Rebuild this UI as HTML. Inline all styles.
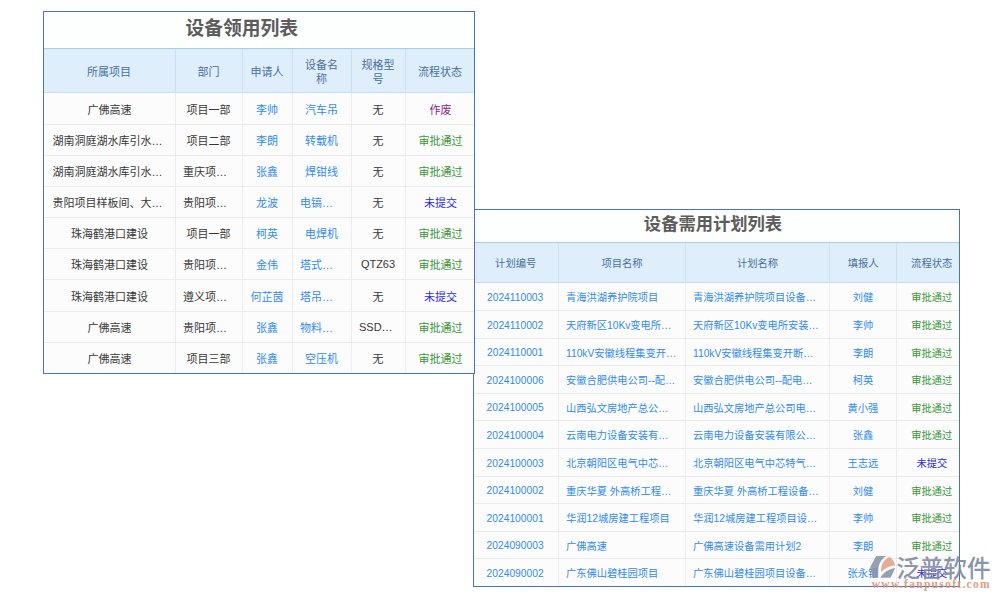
<!DOCTYPE html>
<html lang="zh-CN"><head><meta charset="utf-8"><title>设备领用列表</title>
<style>
html,body{margin:0;padding:0;background:#fff;}
body{width:1000px;height:600px;position:relative;overflow:hidden;font-family:"Liberation Sans", "Noto Sans CJK SC", sans-serif;}
.panel{position:absolute;background:#fcfcfc;box-sizing:border-box;}
.panel::after{content:"";position:absolute;left:0;top:0;right:0;bottom:0;border:1px solid #4573c6;pointer-events:none;}
.panel div{position:absolute;box-sizing:border-box;}
.title{text-align:center;font-weight:bold;color:#5c5c5c;background:#fdfefe;white-space:nowrap;}
.head{background:#dfeefb;border-top:1px solid #a6cdf0;border-bottom:1px solid #c4dcf2;}
.hc{display:flex;align-items:center;justify-content:center;text-align:center;color:#47709c;line-height:1.25;}
.wr{display:inline-block;width:34px;word-break:break-all;text-align:center;}
.row{border-bottom:1px solid #ececec;}
.c{display:flex;align-items:center;white-space:nowrap;overflow:hidden;}
.c.ctr{justify-content:center;}
.c.lft{justify-content:flex-start;}
.vs{width:1px;background:#ececec;}
.vsh{width:1px;background:#cbe0f3;}
.dark{color:#383838;}
.link{color:#318bf0;}
.ok{color:#3a963a;}
.no{color:#2c2ae8;}
.void{color:#8a1a8a;}
#p1{z-index:2;}
#logo{z-index:3;position:absolute;left:868px;top:552px;width:130px;height:46px;}
</style></head><body>
<div class="panel" id="p1" style="left:43px;top:11px;width:432px;height:363px">
<div class="title" style="left:0;top:0;width:432px;height:37px;font-size:18.8px;line-height:37px"><span style="position:relative;top:-1.5px;left:-17.2px">设备领用列表</span></div>
<div class="head" style="left:0;top:37px;width:432px;height:45px"></div>
<div class="hc" style="left:0px;top:37px;width:132px;height:45px;font-size:11px"><span style="position:relative;top:2.2px;left:0px">所属项目</span></div>
<div class="hc" style="left:132px;top:37px;width:67px;height:45px;font-size:11px"><span style="position:relative;top:2.2px;left:0px">部门</span></div>
<div class="hc" style="left:199px;top:37px;width:50px;height:45px;font-size:11px"><span style="position:relative;top:2.2px;left:0px">申请人</span></div>
<div class="hc" style="left:249px;top:37px;width:59px;height:45px;font-size:11px"><span style="position:relative;top:2.2px;left:0px"><span class="wr">设备名称</span></span></div>
<div class="hc" style="left:308px;top:37px;width:54px;height:45px;font-size:11px"><span style="position:relative;top:2.2px;left:0px"><span class="wr">规格型号</span></span></div>
<div class="hc" style="left:362px;top:37px;width:70px;height:45px;font-size:11px"><span style="position:relative;top:2.2px;left:0px">流程状态</span></div>
<div class="row" style="left:0;top:82px;width:432px;height:32px"></div>
<div class="c ctr" style="left:0px;top:82px;width:132px;height:32px;font-size:11px;"><span class="dark" style="position:relative;top:-0.5px;left:0.5px">广佛高速</span></div>
<div class="c ctr" style="left:132px;top:82px;width:67px;height:32px;font-size:11px;"><span class="dark" style="position:relative;top:-0.5px;left:0px">项目一部</span></div>
<div class="c ctr" style="left:199px;top:82px;width:50px;height:32px;font-size:11px;"><span class="link" style="position:relative;top:-0.5px;left:0px">李帅</span></div>
<div class="c ctr" style="left:249px;top:82px;width:59px;height:32px;font-size:11px;"><span class="link" style="position:relative;top:-0.5px;left:0px">汽车吊</span></div>
<div class="c ctr" style="left:308px;top:82px;width:54px;height:32px;font-size:11px;"><span class="dark" style="position:relative;top:-0.5px;left:0px">无</span></div>
<div class="c ctr" style="left:362px;top:82px;width:70px;height:32px;font-size:11px;"><span class="void" style="position:relative;top:-0.5px;left:0.5px">作废</span></div>
<div class="row" style="left:0;top:114px;width:432px;height:31px"></div>
<div class="c lft" style="left:0px;top:114px;width:132px;height:31px;font-size:11px;padding-left:9px;"><span class="dark" style="position:relative;top:-0.5px;left:0.5px">湖南洞庭湖水库引水…</span></div>
<div class="c ctr" style="left:132px;top:114px;width:67px;height:31px;font-size:11px;"><span class="dark" style="position:relative;top:-0.5px;left:0px">项目二部</span></div>
<div class="c ctr" style="left:199px;top:114px;width:50px;height:31px;font-size:11px;"><span class="link" style="position:relative;top:-0.5px;left:0px">李朗</span></div>
<div class="c ctr" style="left:249px;top:114px;width:59px;height:31px;font-size:11px;"><span class="link" style="position:relative;top:-0.5px;left:0px">转载机</span></div>
<div class="c ctr" style="left:308px;top:114px;width:54px;height:31px;font-size:11px;"><span class="dark" style="position:relative;top:-0.5px;left:0px">无</span></div>
<div class="c ctr" style="left:362px;top:114px;width:70px;height:31px;font-size:11px;"><span class="ok" style="position:relative;top:-0.5px;left:0.5px">审批通过</span></div>
<div class="row" style="left:0;top:145px;width:432px;height:31px"></div>
<div class="c lft" style="left:0px;top:145px;width:132px;height:31px;font-size:11px;padding-left:9px;"><span class="dark" style="position:relative;top:-0.5px;left:0.5px">湖南洞庭湖水库引水…</span></div>
<div class="c lft" style="left:132px;top:145px;width:67px;height:31px;font-size:11px;padding-left:8px;"><span class="dark" style="position:relative;top:-0.5px;left:0px">重庆项…</span></div>
<div class="c ctr" style="left:199px;top:145px;width:50px;height:31px;font-size:11px;"><span class="link" style="position:relative;top:-0.5px;left:0px">张鑫</span></div>
<div class="c ctr" style="left:249px;top:145px;width:59px;height:31px;font-size:11px;"><span class="link" style="position:relative;top:-0.5px;left:0px">焊钳线</span></div>
<div class="c ctr" style="left:308px;top:145px;width:54px;height:31px;font-size:11px;"><span class="dark" style="position:relative;top:-0.5px;left:0px">无</span></div>
<div class="c ctr" style="left:362px;top:145px;width:70px;height:31px;font-size:11px;"><span class="ok" style="position:relative;top:-0.5px;left:0.5px">审批通过</span></div>
<div class="row" style="left:0;top:176px;width:432px;height:31px"></div>
<div class="c lft" style="left:0px;top:176px;width:132px;height:31px;font-size:11px;padding-left:9px;"><span class="dark" style="position:relative;top:-0.5px;left:0.5px">贵阳项目样板间、大…</span></div>
<div class="c lft" style="left:132px;top:176px;width:67px;height:31px;font-size:11px;padding-left:8px;"><span class="dark" style="position:relative;top:-0.5px;left:0px">贵阳项…</span></div>
<div class="c ctr" style="left:199px;top:176px;width:50px;height:31px;font-size:11px;"><span class="link" style="position:relative;top:-0.5px;left:0px">龙波</span></div>
<div class="c lft" style="left:249px;top:176px;width:59px;height:31px;font-size:11px;padding-left:8px;"><span class="link" style="position:relative;top:-0.5px;left:0px">电镐…</span></div>
<div class="c ctr" style="left:308px;top:176px;width:54px;height:31px;font-size:11px;"><span class="dark" style="position:relative;top:-0.5px;left:0px">无</span></div>
<div class="c ctr" style="left:362px;top:176px;width:70px;height:31px;font-size:11px;"><span class="no" style="position:relative;top:-0.5px;left:0.5px">未提交</span></div>
<div class="row" style="left:0;top:207px;width:432px;height:31px"></div>
<div class="c ctr" style="left:0px;top:207px;width:132px;height:31px;font-size:11px;"><span class="dark" style="position:relative;top:-0.5px;left:0.5px">珠海鹤港口建设</span></div>
<div class="c ctr" style="left:132px;top:207px;width:67px;height:31px;font-size:11px;"><span class="dark" style="position:relative;top:-0.5px;left:0px">项目一部</span></div>
<div class="c ctr" style="left:199px;top:207px;width:50px;height:31px;font-size:11px;"><span class="link" style="position:relative;top:-0.5px;left:0px">柯英</span></div>
<div class="c ctr" style="left:249px;top:207px;width:59px;height:31px;font-size:11px;"><span class="link" style="position:relative;top:-0.5px;left:0px">电焊机</span></div>
<div class="c ctr" style="left:308px;top:207px;width:54px;height:31px;font-size:11px;"><span class="dark" style="position:relative;top:-0.5px;left:0px">无</span></div>
<div class="c ctr" style="left:362px;top:207px;width:70px;height:31px;font-size:11px;"><span class="ok" style="position:relative;top:-0.5px;left:0.5px">审批通过</span></div>
<div class="row" style="left:0;top:238px;width:432px;height:31px"></div>
<div class="c ctr" style="left:0px;top:238px;width:132px;height:31px;font-size:11px;"><span class="dark" style="position:relative;top:-0.5px;left:0.5px">珠海鹤港口建设</span></div>
<div class="c lft" style="left:132px;top:238px;width:67px;height:31px;font-size:11px;padding-left:8px;"><span class="dark" style="position:relative;top:-0.5px;left:0px">贵阳项…</span></div>
<div class="c ctr" style="left:199px;top:238px;width:50px;height:31px;font-size:11px;"><span class="link" style="position:relative;top:-0.5px;left:0px">金伟</span></div>
<div class="c lft" style="left:249px;top:238px;width:59px;height:31px;font-size:11px;padding-left:8px;"><span class="link" style="position:relative;top:-0.5px;left:0px">塔式…</span></div>
<div class="c ctr" style="left:308px;top:238px;width:54px;height:31px;font-size:11px;"><span class="dark" style="position:relative;top:-0.5px;left:0px">QTZ63</span></div>
<div class="c ctr" style="left:362px;top:238px;width:70px;height:31px;font-size:11px;"><span class="ok" style="position:relative;top:-0.5px;left:0.5px">审批通过</span></div>
<div class="row" style="left:0;top:269px;width:432px;height:32px"></div>
<div class="c ctr" style="left:0px;top:269px;width:132px;height:32px;font-size:11px;"><span class="dark" style="position:relative;top:-0.5px;left:0.5px">珠海鹤港口建设</span></div>
<div class="c lft" style="left:132px;top:269px;width:67px;height:32px;font-size:11px;padding-left:8px;"><span class="dark" style="position:relative;top:-0.5px;left:0px">遵义项…</span></div>
<div class="c ctr" style="left:199px;top:269px;width:50px;height:32px;font-size:11px;"><span class="link" style="position:relative;top:-0.5px;left:0px">何芷茵</span></div>
<div class="c lft" style="left:249px;top:269px;width:59px;height:32px;font-size:11px;padding-left:8px;"><span class="link" style="position:relative;top:-0.5px;left:0px">塔吊…</span></div>
<div class="c ctr" style="left:308px;top:269px;width:54px;height:32px;font-size:11px;"><span class="dark" style="position:relative;top:-0.5px;left:0px">无</span></div>
<div class="c ctr" style="left:362px;top:269px;width:70px;height:32px;font-size:11px;"><span class="no" style="position:relative;top:-0.5px;left:0.5px">未提交</span></div>
<div class="row" style="left:0;top:301px;width:432px;height:31px"></div>
<div class="c ctr" style="left:0px;top:301px;width:132px;height:31px;font-size:11px;"><span class="dark" style="position:relative;top:-0.5px;left:0.5px">广佛高速</span></div>
<div class="c lft" style="left:132px;top:301px;width:67px;height:31px;font-size:11px;padding-left:8px;"><span class="dark" style="position:relative;top:-0.5px;left:0px">贵阳项…</span></div>
<div class="c ctr" style="left:199px;top:301px;width:50px;height:31px;font-size:11px;"><span class="link" style="position:relative;top:-0.5px;left:0px">张鑫</span></div>
<div class="c lft" style="left:249px;top:301px;width:59px;height:31px;font-size:11px;padding-left:8px;"><span class="link" style="position:relative;top:-0.5px;left:0px">物料…</span></div>
<div class="c lft" style="left:308px;top:301px;width:54px;height:31px;font-size:11px;padding-left:8px;"><span class="dark" style="position:relative;top:-0.5px;left:0px">SSD…</span></div>
<div class="c ctr" style="left:362px;top:301px;width:70px;height:31px;font-size:11px;"><span class="ok" style="position:relative;top:-0.5px;left:0.5px">审批通过</span></div>
<div class="row last" style="left:0;top:332px;width:432px;height:31px"></div>
<div class="c ctr" style="left:0px;top:332px;width:132px;height:31px;font-size:11px;"><span class="dark" style="position:relative;top:-0.5px;left:0.5px">广佛高速</span></div>
<div class="c ctr" style="left:132px;top:332px;width:67px;height:31px;font-size:11px;"><span class="dark" style="position:relative;top:-0.5px;left:0px">项目三部</span></div>
<div class="c ctr" style="left:199px;top:332px;width:50px;height:31px;font-size:11px;"><span class="link" style="position:relative;top:-0.5px;left:0px">张鑫</span></div>
<div class="c ctr" style="left:249px;top:332px;width:59px;height:31px;font-size:11px;"><span class="link" style="position:relative;top:-0.5px;left:0px">空压机</span></div>
<div class="c ctr" style="left:308px;top:332px;width:54px;height:31px;font-size:11px;"><span class="dark" style="position:relative;top:-0.5px;left:0px">无</span></div>
<div class="c ctr" style="left:362px;top:332px;width:70px;height:31px;font-size:11px;"><span class="ok" style="position:relative;top:-0.5px;left:0.5px">审批通过</span></div>
<div class="vs" style="left:132px;top:82px;height:281px"></div>
<div class="vsh" style="left:132px;top:38px;height:44px"></div>
<div class="vs" style="left:199px;top:82px;height:281px"></div>
<div class="vsh" style="left:199px;top:38px;height:44px"></div>
<div class="vs" style="left:249px;top:82px;height:281px"></div>
<div class="vsh" style="left:249px;top:38px;height:44px"></div>
<div class="vs" style="left:308px;top:82px;height:281px"></div>
<div class="vsh" style="left:308px;top:38px;height:44px"></div>
<div class="vs" style="left:362px;top:82px;height:281px"></div>
<div class="vsh" style="left:362px;top:38px;height:44px"></div>
</div>
<div class="panel" id="p2" style="left:473px;top:209px;width:487px;height:378px">
<div class="title" style="left:0;top:0;width:487px;height:33px;font-size:17.3px;line-height:33px"><span style="position:relative;top:-0.6px;left:-3.5px">设备需用计划列表</span></div>
<div class="head" style="left:0;top:33px;width:487px;height:41px"></div>
<div class="hc" style="left:0px;top:33px;width:85px;height:41px;font-size:10.3px"><span style="position:relative;top:2px;left:0.2px">计划编号</span></div>
<div class="hc" style="left:85px;top:33px;width:127px;height:41px;font-size:10.3px"><span style="position:relative;top:2px;left:0.5px">项目名称</span></div>
<div class="hc" style="left:212px;top:33px;width:144px;height:41px;font-size:10.3px"><span style="position:relative;top:2px;left:0.5px">计划名称</span></div>
<div class="hc" style="left:356px;top:33px;width:67px;height:41px;font-size:10.3px"><span style="position:relative;top:2px;left:0.6px">填报人</span></div>
<div class="hc" style="left:423px;top:33px;width:64px;height:41px;font-size:10.3px"><span style="position:relative;top:2px;left:3.7px">流程状态</span></div>
<div class="row" style="left:0;top:74px;width:487px;height:28px"></div>
<div class="c ctr" style="left:0px;top:74px;width:85px;height:28px;font-size:10.25px;"><span class="link" style="position:relative;top:0.15px;left:-0.4px">2024110003</span></div>
<div class="c lft" style="left:85px;top:74px;width:127px;height:28px;font-size:10.25px;padding-left:8px;"><span class="link" style="position:relative;top:-0.45px;left:0px">青海洪湖养护院项目</span></div>
<div class="c lft" style="left:212px;top:74px;width:144px;height:28px;font-size:10.25px;padding-left:8px;"><span class="link" style="position:relative;top:-0.45px;left:0px">青海洪湖养护院项目设备…</span></div>
<div class="c ctr" style="left:356px;top:74px;width:67px;height:28px;font-size:10.25px;"><span class="link" style="position:relative;top:-0.45px;left:0.4px">刘健</span></div>
<div class="c ctr" style="left:423px;top:74px;width:64px;height:28px;font-size:10.25px;"><span class="ok" style="position:relative;top:-0.45px;left:3.8px">审批通过</span></div>
<div class="row" style="left:0;top:102px;width:487px;height:28px"></div>
<div class="c ctr" style="left:0px;top:102px;width:85px;height:28px;font-size:10.25px;"><span class="link" style="position:relative;top:0.15px;left:-0.4px">2024110002</span></div>
<div class="c lft" style="left:85px;top:102px;width:127px;height:28px;font-size:10.25px;padding-left:8px;"><span class="link" style="position:relative;top:-0.45px;left:0px">天府新区10Kv变电所…</span></div>
<div class="c lft" style="left:212px;top:102px;width:144px;height:28px;font-size:10.25px;padding-left:8px;"><span class="link" style="position:relative;top:-0.45px;left:0px">天府新区10Kv变电所安装…</span></div>
<div class="c ctr" style="left:356px;top:102px;width:67px;height:28px;font-size:10.25px;"><span class="link" style="position:relative;top:-0.45px;left:0.4px">李帅</span></div>
<div class="c ctr" style="left:423px;top:102px;width:64px;height:28px;font-size:10.25px;"><span class="ok" style="position:relative;top:-0.45px;left:3.8px">审批通过</span></div>
<div class="row" style="left:0;top:130px;width:487px;height:27px"></div>
<div class="c ctr" style="left:0px;top:130px;width:85px;height:27px;font-size:10.25px;"><span class="link" style="position:relative;top:0.15px;left:-0.4px">2024110001</span></div>
<div class="c lft" style="left:85px;top:130px;width:127px;height:27px;font-size:10.25px;padding-left:8px;"><span class="link" style="position:relative;top:-0.45px;left:0px">110kV安徽线程集变开…</span></div>
<div class="c lft" style="left:212px;top:130px;width:144px;height:27px;font-size:10.25px;padding-left:8px;"><span class="link" style="position:relative;top:-0.45px;left:0px">110kV安徽线程集变开断…</span></div>
<div class="c ctr" style="left:356px;top:130px;width:67px;height:27px;font-size:10.25px;"><span class="link" style="position:relative;top:-0.45px;left:0.4px">李朗</span></div>
<div class="c ctr" style="left:423px;top:130px;width:64px;height:27px;font-size:10.25px;"><span class="ok" style="position:relative;top:-0.45px;left:3.8px">审批通过</span></div>
<div class="row" style="left:0;top:157px;width:487px;height:28px"></div>
<div class="c ctr" style="left:0px;top:157px;width:85px;height:28px;font-size:10.25px;"><span class="link" style="position:relative;top:0.15px;left:-0.4px">2024100006</span></div>
<div class="c lft" style="left:85px;top:157px;width:127px;height:28px;font-size:10.25px;padding-left:8px;"><span class="link" style="position:relative;top:-0.45px;left:0px">安徽合肥供电公司--配…</span></div>
<div class="c lft" style="left:212px;top:157px;width:144px;height:28px;font-size:10.25px;padding-left:8px;"><span class="link" style="position:relative;top:-0.45px;left:0px">安徽合肥供电公司--配电…</span></div>
<div class="c ctr" style="left:356px;top:157px;width:67px;height:28px;font-size:10.25px;"><span class="link" style="position:relative;top:-0.45px;left:0.4px">柯英</span></div>
<div class="c ctr" style="left:423px;top:157px;width:64px;height:28px;font-size:10.25px;"><span class="ok" style="position:relative;top:-0.45px;left:3.8px">审批通过</span></div>
<div class="row" style="left:0;top:185px;width:487px;height:27px"></div>
<div class="c ctr" style="left:0px;top:185px;width:85px;height:27px;font-size:10.25px;"><span class="link" style="position:relative;top:0.15px;left:-0.4px">2024100005</span></div>
<div class="c lft" style="left:85px;top:185px;width:127px;height:27px;font-size:10.25px;padding-left:8px;"><span class="link" style="position:relative;top:-0.45px;left:0px">山西弘文房地产总公…</span></div>
<div class="c lft" style="left:212px;top:185px;width:144px;height:27px;font-size:10.25px;padding-left:8px;"><span class="link" style="position:relative;top:-0.45px;left:0px">山西弘文房地产总公司电…</span></div>
<div class="c ctr" style="left:356px;top:185px;width:67px;height:27px;font-size:10.25px;"><span class="link" style="position:relative;top:-0.45px;left:0.4px">黄小强</span></div>
<div class="c ctr" style="left:423px;top:185px;width:64px;height:27px;font-size:10.25px;"><span class="ok" style="position:relative;top:-0.45px;left:3.8px">审批通过</span></div>
<div class="row" style="left:0;top:212px;width:487px;height:28px"></div>
<div class="c ctr" style="left:0px;top:212px;width:85px;height:28px;font-size:10.25px;"><span class="link" style="position:relative;top:0.15px;left:-0.4px">2024100004</span></div>
<div class="c lft" style="left:85px;top:212px;width:127px;height:28px;font-size:10.25px;padding-left:8px;"><span class="link" style="position:relative;top:-0.45px;left:0px">云南电力设备安装有…</span></div>
<div class="c lft" style="left:212px;top:212px;width:144px;height:28px;font-size:10.25px;padding-left:8px;"><span class="link" style="position:relative;top:-0.45px;left:0px">云南电力设备安装有限公…</span></div>
<div class="c ctr" style="left:356px;top:212px;width:67px;height:28px;font-size:10.25px;"><span class="link" style="position:relative;top:-0.45px;left:0.4px">张鑫</span></div>
<div class="c ctr" style="left:423px;top:212px;width:64px;height:28px;font-size:10.25px;"><span class="ok" style="position:relative;top:-0.45px;left:3.8px">审批通过</span></div>
<div class="row" style="left:0;top:240px;width:487px;height:28px"></div>
<div class="c ctr" style="left:0px;top:240px;width:85px;height:28px;font-size:10.25px;"><span class="link" style="position:relative;top:0.15px;left:-0.4px">2024100003</span></div>
<div class="c lft" style="left:85px;top:240px;width:127px;height:28px;font-size:10.25px;padding-left:8px;"><span class="link" style="position:relative;top:-0.45px;left:0px">北京朝阳区电气中芯…</span></div>
<div class="c lft" style="left:212px;top:240px;width:144px;height:28px;font-size:10.25px;padding-left:8px;"><span class="link" style="position:relative;top:-0.45px;left:0px">北京朝阳区电气中芯特气…</span></div>
<div class="c ctr" style="left:356px;top:240px;width:67px;height:28px;font-size:10.25px;"><span class="link" style="position:relative;top:-0.45px;left:0.4px">王志远</span></div>
<div class="c ctr" style="left:423px;top:240px;width:64px;height:28px;font-size:10.25px;"><span class="no" style="position:relative;top:-0.45px;left:3.8px">未提交</span></div>
<div class="row" style="left:0;top:268px;width:487px;height:27px"></div>
<div class="c ctr" style="left:0px;top:268px;width:85px;height:27px;font-size:10.25px;"><span class="link" style="position:relative;top:0.15px;left:-0.4px">2024100002</span></div>
<div class="c lft" style="left:85px;top:268px;width:127px;height:27px;font-size:10.25px;padding-left:8px;"><span class="link" style="position:relative;top:-0.45px;left:0px">重庆华夏 外高桥工程…</span></div>
<div class="c lft" style="left:212px;top:268px;width:144px;height:27px;font-size:10.25px;padding-left:8px;"><span class="link" style="position:relative;top:-0.45px;left:0px">重庆华夏 外高桥工程设备…</span></div>
<div class="c ctr" style="left:356px;top:268px;width:67px;height:27px;font-size:10.25px;"><span class="link" style="position:relative;top:-0.45px;left:0.4px">刘健</span></div>
<div class="c ctr" style="left:423px;top:268px;width:64px;height:27px;font-size:10.25px;"><span class="ok" style="position:relative;top:-0.45px;left:3.8px">审批通过</span></div>
<div class="row" style="left:0;top:295px;width:487px;height:28px"></div>
<div class="c ctr" style="left:0px;top:295px;width:85px;height:28px;font-size:10.25px;"><span class="link" style="position:relative;top:0.15px;left:-0.4px">2024100001</span></div>
<div class="c lft" style="left:85px;top:295px;width:127px;height:28px;font-size:10.25px;padding-left:8px;"><span class="link" style="position:relative;top:-0.45px;left:0px">华润12城房建工程项目</span></div>
<div class="c lft" style="left:212px;top:295px;width:144px;height:28px;font-size:10.25px;padding-left:8px;"><span class="link" style="position:relative;top:-0.45px;left:0px">华润12城房建工程项目设…</span></div>
<div class="c ctr" style="left:356px;top:295px;width:67px;height:28px;font-size:10.25px;"><span class="link" style="position:relative;top:-0.45px;left:0.4px">李帅</span></div>
<div class="c ctr" style="left:423px;top:295px;width:64px;height:28px;font-size:10.25px;"><span class="ok" style="position:relative;top:-0.45px;left:3.8px">审批通过</span></div>
<div class="row" style="left:0;top:323px;width:487px;height:27px"></div>
<div class="c ctr" style="left:0px;top:323px;width:85px;height:27px;font-size:10.25px;"><span class="link" style="position:relative;top:0.15px;left:-0.4px">2024090003</span></div>
<div class="c lft" style="left:85px;top:323px;width:127px;height:27px;font-size:10.25px;padding-left:8px;"><span class="link" style="position:relative;top:-0.45px;left:0px">广佛高速</span></div>
<div class="c lft" style="left:212px;top:323px;width:144px;height:27px;font-size:10.25px;padding-left:8px;"><span class="link" style="position:relative;top:-0.45px;left:0px">广佛高速设备需用计划2</span></div>
<div class="c ctr" style="left:356px;top:323px;width:67px;height:27px;font-size:10.25px;"><span class="link" style="position:relative;top:-0.45px;left:0.4px">李朗</span></div>
<div class="c ctr" style="left:423px;top:323px;width:64px;height:27px;font-size:10.25px;"><span class="ok" style="position:relative;top:-0.45px;left:3.8px">审批通过</span></div>
<div class="row last" style="left:0;top:350px;width:487px;height:28px"></div>
<div class="c ctr" style="left:0px;top:350px;width:85px;height:28px;font-size:10.25px;"><span class="link" style="position:relative;top:0.15px;left:-0.4px">2024090002</span></div>
<div class="c lft" style="left:85px;top:350px;width:127px;height:28px;font-size:10.25px;padding-left:8px;"><span class="link" style="position:relative;top:-0.45px;left:0px">广东佛山碧桂园项目</span></div>
<div class="c lft" style="left:212px;top:350px;width:144px;height:28px;font-size:10.25px;padding-left:8px;"><span class="link" style="position:relative;top:-0.45px;left:0px">广东佛山碧桂园项目设备…</span></div>
<div class="c ctr" style="left:356px;top:350px;width:67px;height:28px;font-size:10.25px;"><span class="link" style="position:relative;top:-0.45px;left:0.4px">张永银</span></div>
<div class="c ctr" style="left:423px;top:350px;width:64px;height:28px;font-size:10.25px;"><span class="no" style="position:relative;top:-0.45px;left:3.8px">未提交</span></div>
<div class="vs" style="left:85px;top:74px;height:304px"></div>
<div class="vsh" style="left:85px;top:34px;height:40px"></div>
<div class="vs" style="left:212px;top:74px;height:304px"></div>
<div class="vsh" style="left:212px;top:34px;height:40px"></div>
<div class="vs" style="left:356px;top:74px;height:304px"></div>
<div class="vsh" style="left:356px;top:34px;height:40px"></div>
<div class="vs" style="left:423px;top:74px;height:304px"></div>
<div class="vsh" style="left:423px;top:34px;height:40px"></div>
</div>
<div id="logo">
<svg width="130" height="46" viewBox="0 0 130 46">
<g opacity="0.88">
<path d="M8.2 3.9 L18.1 3.9 C14.5 6.2 12 9.5 10.9 13.5 C10.3 16 10.2 18 10.2 25.8 L4.5 25.8 L2.2 15 Z" fill="#8793ad"/>
<path d="M13 20.1 C12.6 13.5 15.5 7.6 21.5 5.1 C24.5 7 26.5 10 27.2 13.3 C21.5 13.8 16.5 16.2 13 20.1 Z" fill="#e2a187"/>
<path d="M12.4 25.8 C15.5 20.5 20.5 17.2 27.2 16.1 L22.6 25.8 Z" fill="#8793ad"/>
<text x="28.2" y="25" font-family='"Liberation Sans","Noto Sans CJK SC",sans-serif' font-weight="500" font-size="23.6" fill="#7c879c">泛普软件</text>
<text x="3.7" y="36.3" font-family='"Liberation Serif",serif' font-weight="bold" font-size="11.5" letter-spacing="1.3" fill="#d9926f">www.fanpusoft.com</text>
</g>
</svg>
</div>
</body></html>
